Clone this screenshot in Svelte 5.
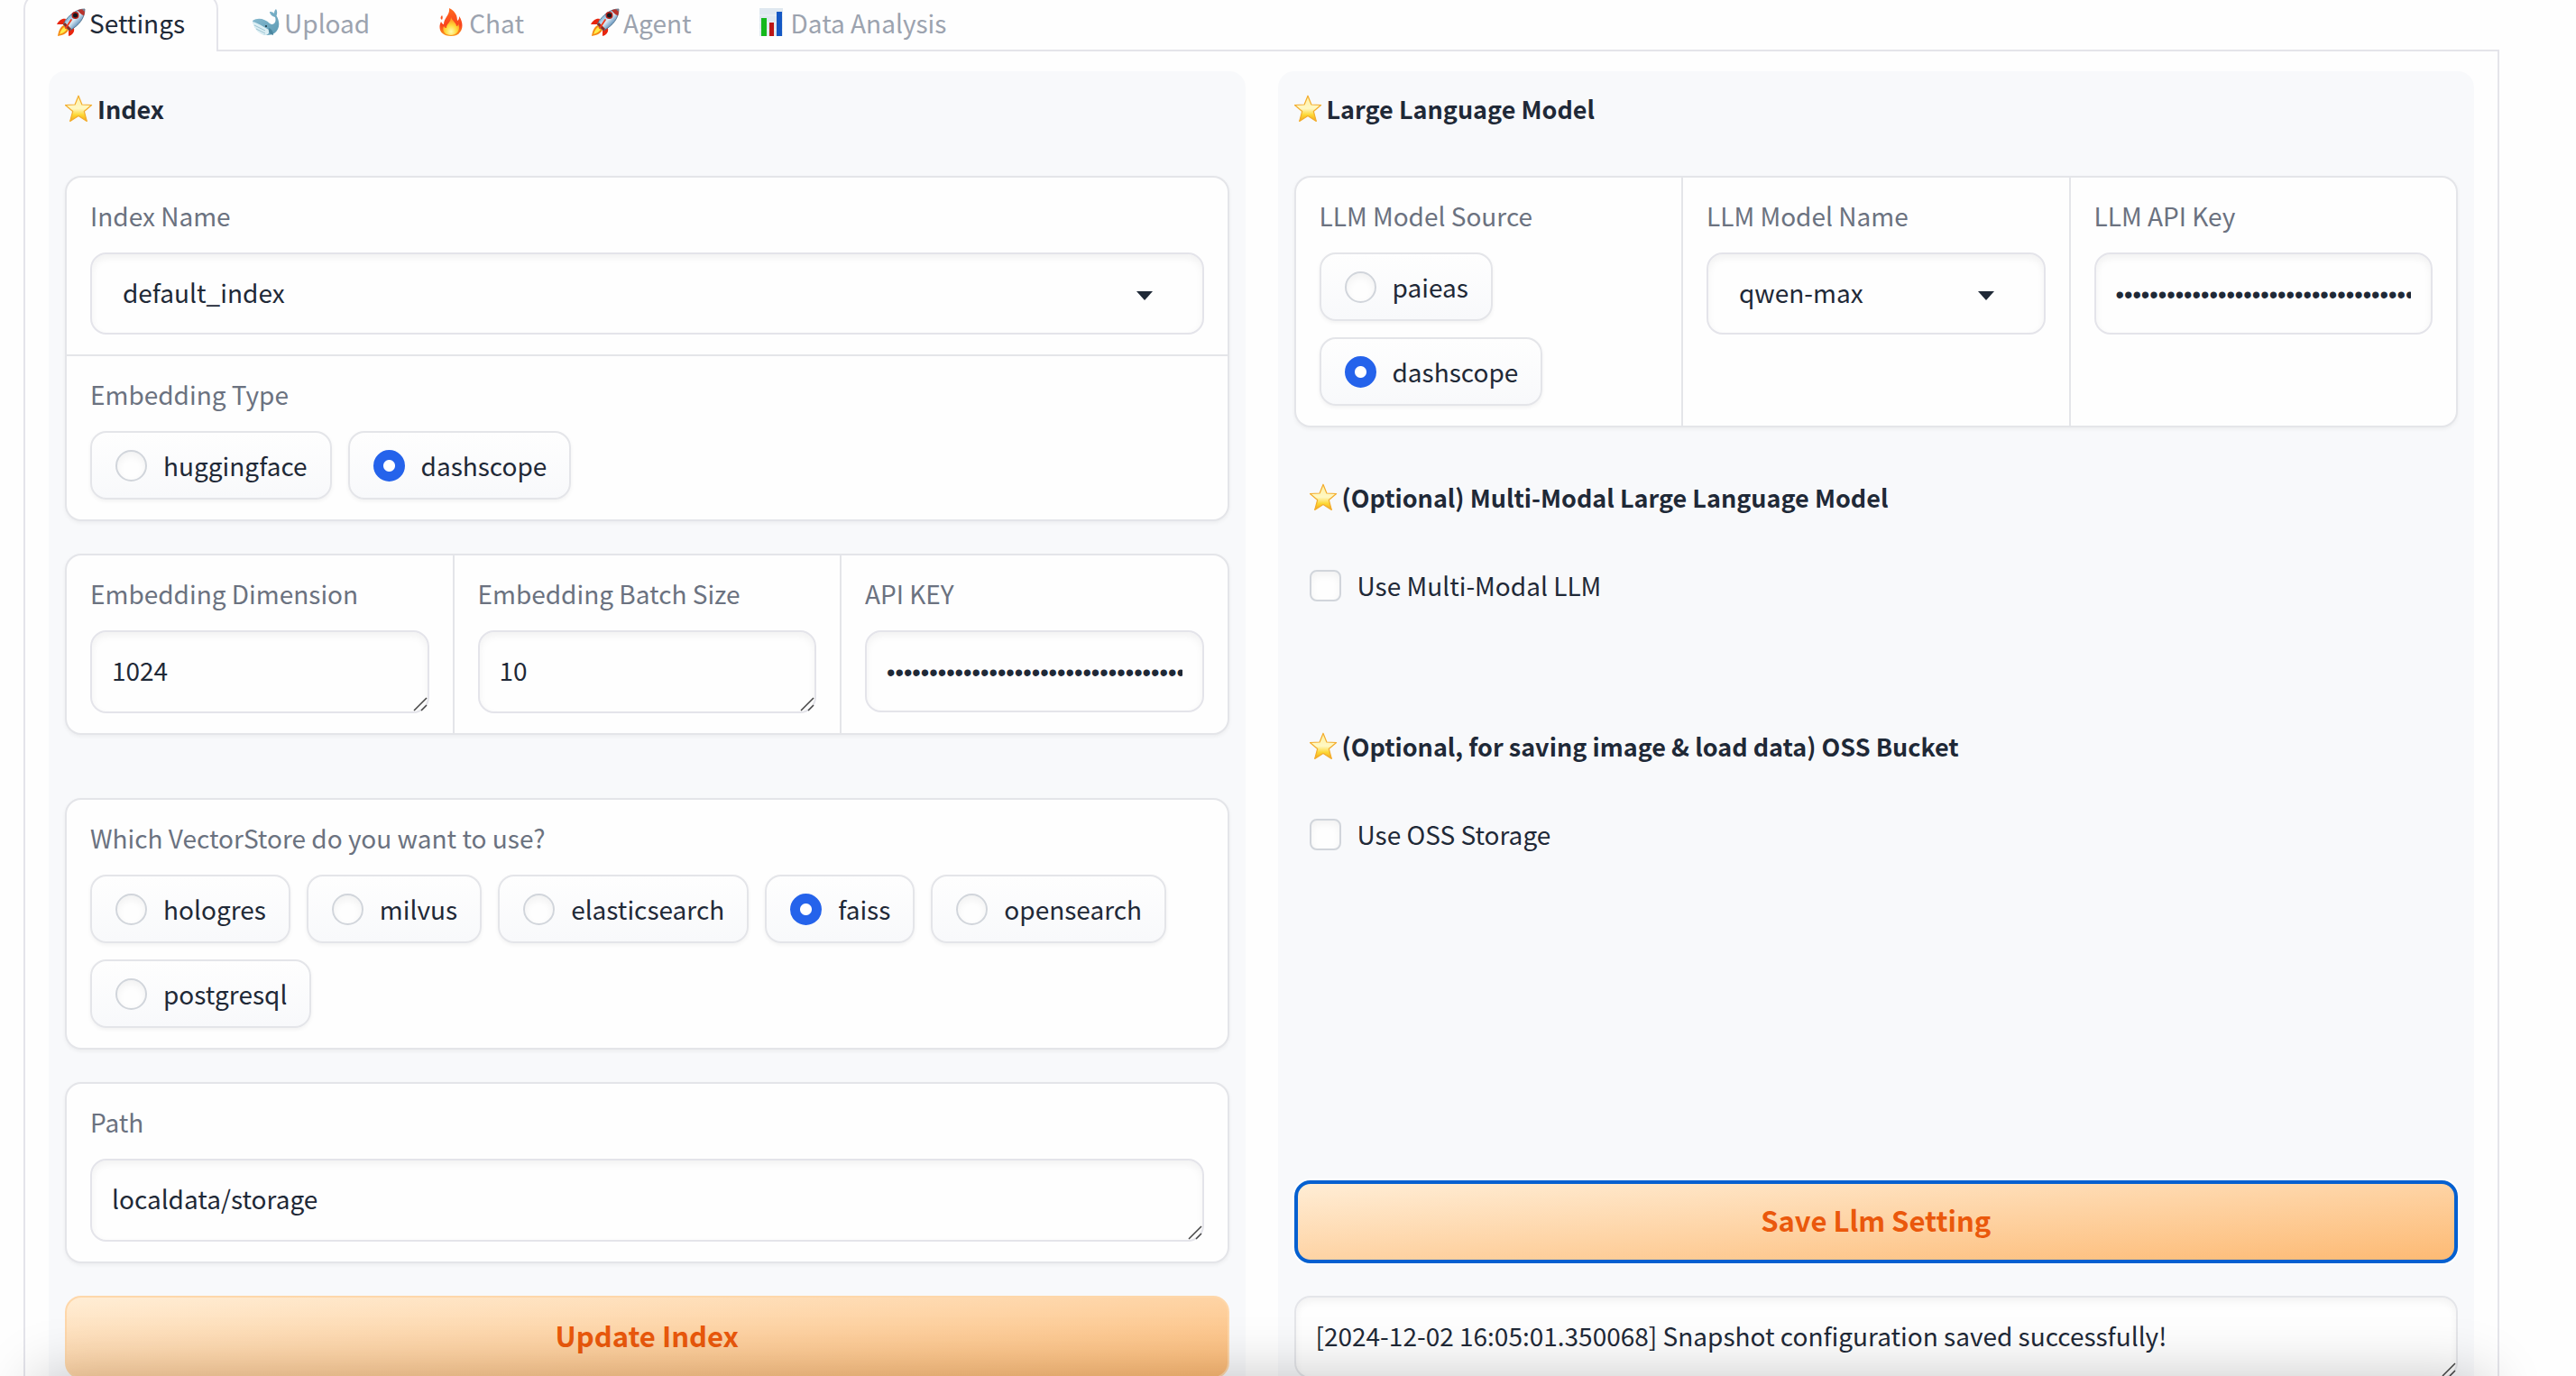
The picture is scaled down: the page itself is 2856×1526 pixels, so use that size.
<script>
  const tabs = [
    { icon: 'rocket', label: 'Settings' },
    { icon: 'whale', label: 'Upload' },
    { icon: 'fire', label: 'Chat' },
    { icon: 'rocket', label: 'Agent' },
    { icon: 'chart', label: 'Data Analysis' }
  ];
  const stores = ['hologres', 'milvus', 'elasticsearch', 'faiss', 'opensearch', 'postgresql'];

  let activeTab = $state('Settings');
  let indexName = $state('default_index');
  let embedding = $state('dashscope');
  let dimension = $state('1024');
  let batchSize = $state('10');
  let apiKey = $state('k'.repeat(35));
  let store = $state('faiss');
  let path = $state('localdata/storage');
  let llmSource = $state('dashscope');
  let llmName = $state('qwen-max');
  let llmKey = $state('k'.repeat(35));
  let multiModal = $state(false);
  let oss = $state(false);
  let output = $state('[2024-12-02 16:05:01.350068] Snapshot configuration saved successfully!');
</script>

{#snippet icon(name)}
  <svg class="icon" viewBox="0 0 32 32" aria-hidden="true">
    {#if name === 'star'}
      <defs>
        <linearGradient id="star-fill" x1="0" y1="0" x2="0" y2="1">
          <stop offset="0" stop-color="#fff0a0" />
          <stop offset=".5" stop-color="#fff8c4" />
          <stop offset=".75" stop-color="#fdd835" />
          <stop offset="1" stop-color="#f2a51c" />
        </linearGradient>
      </defs>
      <path d="M15 1.200 L18.900 11 L29.600 11.500 L21.300 18.500 L24.300 29.400 L15 23.500 L5.700 29.400 L8.700 18.500 L0.400 11.500 L11.100 11 Z" fill="url(#star-fill)" stroke="#f3ac2c" stroke-width="1.200" stroke-linejoin="round" />
    {:else if name === 'rocket'}
      <defs>
        <linearGradient id="rocket-body" x1="0" y1="0" x2="1" y2="1">
          <stop offset=".2" stop-color="#4f9bd0" />
          <stop offset=".5" stop-color="#dcebf4" />
          <stop offset=".8" stop-color="#2f6ea8" />
        </linearGradient>
      </defs>
      <path d="M10 12 C6 11 2 14 0 18 L8 18 Z M19 22 C20 27 17 30 13 31 L13 23 Z" fill="#e8250e" />
      <path d="M8 19 C4 20 2 25 1 31 C7 30 11 28 13 24 Z" fill="#f58a12" />
      <path d="M8 21 C5 23 4 26 3 29 C7 28 9 26 11 24 Z" fill="#ffec4a" />
      <path d="M31 1 C22 1 13 7 7 18 L14 25 C25 19 31 11 31 1 Z" fill="url(#rocket-body)" stroke="#45647c" stroke-width=".8" />
      <path d="M31 1 C28 1 25 1.500 23 2.500 C25 5 27 7 30 8.500 C30.800 6 31 3.500 31 1 Z" fill="#b9322a" />
      <path d="M31 1 L28 1.200 L30.500 4 Z" fill="#6c8aa0" />
      <circle cx="20.500" cy="8" r="4" fill="#b52018" />
      <circle cx="20.500" cy="8" r="2.500" fill="#101820" />
      <path d="M9 16 L16 23 L14 25 L7 18 Z" fill="#8d2b20" />
      <path d="M16 13 L10 22" stroke="#ef3b20" stroke-width="1.800" stroke-linecap="round" />
    {:else if name === 'whale'}
      <defs>
        <linearGradient id="whale-body" x1="0" y1="0" x2="1" y2="1">
          <stop offset="0" stop-color="#8fc0d4" />
          <stop offset="1" stop-color="#5b9ab4" />
        </linearGradient>
      </defs>
      <path d="M1 14 C7 10 15 12 20 17 C24 20 28 16 26 10 C22 9 20 6 20 4 C22 4 24 4.500 25 6 C25 4 25.500 2 27 1 C28.500 3 28.500 6 27.500 8.500 C32 16 31 24 25 28 C15 33 4 28 1 14 Z" fill="url(#whale-body)" />
      <path d="M1 15 C8 17 12 20 19 24 C20 27 19 29 16 30 C8 29 3 24 1 15 Z" fill="#dceff4" />
      <path d="M3 19 L15 25 M5 23 L15 28" stroke="#8bb8c8" stroke-width=".8" />
      <path d="M19 22 C22 23 24 26 24 30 C20 29 18 26 19 22 Z" fill="#4a869f" />
      <circle cx="16" cy="20" r="1" fill="#17313d" />
    {:else if name === 'fire'}
      <defs>
        <linearGradient id="fire-outer" x1="0" y1="0" x2="0" y2="1">
          <stop offset="0" stop-color="#ff6a1e" />
          <stop offset=".6" stop-color="#f9431d" />
          <stop offset="1" stop-color="#fb9a1b" />
        </linearGradient>
        <radialGradient id="fire-inner" cx=".5" cy=".8" r=".6">
          <stop offset="0" stop-color="#fffbb0" />
          <stop offset=".6" stop-color="#ffd83a" />
          <stop offset="1" stop-color="#ffa126" />
        </radialGradient>
      </defs>
      <path d="M14 0 C22 4 23 10 23 14 C25 13 25 11 25 9 C31 17 30 31 16 31 C5 31 1 23 5 15 C6 17 7 18 8 18 C8 11 15 8 14 0 Z" fill="url(#fire-outer)" />
      <path d="M16 10 C17 14 22 16 22 20 C24 20 24 18 24 17 C27 24 23 30 16 30 C8 30 6 24 8 20 C9 22 10 22 11 22 C11 17 16 16 16 10 Z" fill="url(#fire-inner)" />
      <path d="M6 8 C4 10 4 12 6 13 C7 11 7 9 6 8 Z" fill="#f9501d" />
    {:else}
      <rect x="1" y="0" width="26" height="31" fill="#dfe8f0" />
      <path d="M1 8 H27 M1 16 H27 M1 24 H27" stroke="#eef3f7" stroke-width="1" />
      <rect x="3" y="11" width="6" height="20" fill="#14b81c" />
      <rect x="12" y="16" width="5" height="15" fill="#bb1616" />
      <rect x="20" y="4" width="6" height="27" fill="#1458c4" />
    {/if}
  </svg>
{/snippet}

{#snippet grip()}
  <svg class="grip" viewBox="0 0 16 16" aria-hidden="true">
    <path d="M1 15 L15 1 M9 15 L15 9" stroke="#444" stroke-width="1.500" />
  </svg>
{/snippet}

{#snippet caret()}
  <svg class="caret" viewBox="0 0 18 10" aria-hidden="true"><path d="M0 0 H18 L9 10 Z" /></svg>
{/snippet}

<div class="page">
  <div class="tabs" role="tablist">
    {#each tabs as tab}
      <button
        class="tab"
        class:active={activeTab === tab.label}
        role="tab"
        aria-selected={activeTab === tab.label}
        onclick={() => (activeTab = tab.label)}
      >{@render icon(tab.icon)}{tab.label}</button>
    {/each}
  </div>

  <main class="panel">
    <section class="column">
      <h2 class="heading">{@render icon('star')}Index</h2>

      <div class="card">
        <div class="cell">
          <label class="label" for="index-name">Index Name</label>
          <div class="control">
            <select id="index-name" class="field select" bind:value={indexName}>
              <option>default_index</option>
            </select>
            {@render caret()}
          </div>
        </div>
        <fieldset class="cell">
          <legend class="label">Embedding Type</legend>
          <div class="choices">
            {#each ['huggingface', 'dashscope'] as option}
              <label class="choice">
                <input type="radio" name="embedding" value={option} bind:group={embedding} />{option}
              </label>
            {/each}
          </div>
        </fieldset>
      </div>

      <div class="card triple">
        <div class="cell">
          <label class="label" for="dimension">Embedding Dimension</label>
          <div class="control">
            <textarea id="dimension" class="field" rows="1" bind:value={dimension}></textarea>
            {@render grip()}
          </div>
        </div>
        <div class="cell">
          <label class="label" for="batch">Embedding Batch Size</label>
          <div class="control">
            <textarea id="batch" class="field" rows="1" bind:value={batchSize}></textarea>
            {@render grip()}
          </div>
        </div>
        <div class="cell">
          <label class="label" for="api-key">API KEY</label>
          <input id="api-key" class="field password" type="password" bind:value={apiKey} />
        </div>
      </div>

      <div class="card spaced">
        <fieldset class="cell">
          <legend class="label">Which VectorStore do you want to use?</legend>
          <div class="choices">
            {#each stores as option}
              <label class="choice">
                <input type="radio" name="store" value={option} bind:group={store} />{option}
              </label>
            {/each}
          </div>
        </fieldset>
      </div>

      <div class="card">
        <div class="cell">
          <label class="label" for="path">Path</label>
          <div class="control">
            <textarea id="path" class="field" rows="1" bind:value={path}></textarea>
            {@render grip()}
          </div>
        </div>
      </div>

      <button class="primary">Update Index</button>
    </section>

    <section class="column">
      <h2 class="heading">{@render icon('star')}Large Language Model</h2>

      <div class="card triple">
        <fieldset class="cell">
          <legend class="label">LLM Model Source</legend>
          <div class="choices stacked">
            {#each ['paieas', 'dashscope'] as option}
              <label class="choice">
                <input type="radio" name="llm-source" value={option} bind:group={llmSource} />{option}
              </label>
            {/each}
          </div>
        </fieldset>
        <div class="cell">
          <label class="label" for="llm-name">LLM Model Name</label>
          <div class="control">
            <select id="llm-name" class="field select" bind:value={llmName}>
              <option>qwen-max</option>
            </select>
            {@render caret()}
          </div>
        </div>
        <div class="cell">
          <label class="label" for="llm-key">LLM API Key</label>
          <input id="llm-key" class="field password" type="password" bind:value={llmKey} />
        </div>
      </div>

      <div class="group">
        <h2 class="heading">{@render icon('star')}(Optional) Multi-Modal Large Language Model</h2>
        <label class="check"><input type="checkbox" bind:checked={multiModal} />Use Multi-Modal LLM</label>
      </div>

      <div class="group last">
        <h2 class="heading">{@render icon('star')}(Optional, for saving image &amp; load data) OSS Bucket</h2>
        <label class="check"><input type="checkbox" bind:checked={oss} />Use OSS Storage</label>
      </div>

      <button class="primary focused">Save Llm Setting</button>

      <div class="control">
        <textarea class="field output" rows="1" aria-label="Output" bind:value={output}></textarea>
        {@render grip()}
      </div>
    </section>
  </main>

  <div class="bottom-shade"></div>
</div>

<style>
  :global(body) {
    background: #fefefe;
  }

  .page {
    box-sizing: border-box;
    height: 100vh;
    overflow: hidden;
    padding: 0 85px 0 26px;
    font-family: 'Noto Sans CJK SC', 'Noto Sans', sans-serif;
    font-size: 28px;
    line-height: 46px;
    color: #1f2937;
  }

  .page :is(button, input, select, textarea) {
    box-sizing: border-box;
    margin: 0;
    font: inherit;
    color: inherit;
  }

  .icon {
    flex: none;
    width: 32px;
    height: 32px;
    margin-right: 4px;
  }

  .tabs {
    display: flex;
    margin-top: -8px;
  }

  .page .tab {
    display: flex;
    align-items: center;
    margin-bottom: -2px;
    padding: 8px 35px 9px;
    border: 2px solid transparent;
    border-bottom: 0;
    border-radius: 18px 18px 0 0;
    background: none;
    color: #9ca3af;
    position: relative;
  }

  .page .tab.active {
    border-color: #e4e4ea;
    background: #fefefe;
    color: #1f2937;
  }

  .panel {
    display: grid;
    grid-template-columns: 1fr 1fr;
    gap: 36px;
    padding: 22px 26px;
    border: 2px solid #e4e4ea;
  }

  .column {
    display: flex;
    flex-direction: column;
    gap: 36px;
    padding: 18px;
    border-radius: 18px;
    background: #f8f9fb;
  }

  .heading {
    display: flex;
    align-items: center;
    margin: 0;
    padding: 1px 0 15px;
    font-size: 27px;
    font-weight: 700;
  }

  .card {
    display: grid;
    gap: 2px;
    overflow: hidden;
    border: 2px solid #e4e5e9;
    border-radius: 18px;
    background: #e4e5e9;
    box-shadow: 0 2px 4px rgba(0, 0, 0, 0.05);
  }

  .triple {
    grid-template-columns: repeat(3, 1fr);
  }

  .spaced {
    margin-top: 34px;
  }

  .cell {
    min-width: 0;
    margin: 0;
    padding: 19px 26px 22px;
    border: 0;
    background: #fefefe;
  }

  .label {
    display: block;
    float: left;
    width: 100%;
    margin-bottom: 18px;
    padding: 0;
    color: #6b7280;
  }

  .control {
    display: grid;
    width: 100%;
    position: relative;
  }

  .field {
    display: block;
    width: 100%;
    padding: 19px 22px 23px;
    border: 2px solid #e4e4ea;
    border-radius: 18px;
    background: #fefefe;
    box-shadow: inset 0 4px 8px rgba(0, 0, 0, 0.05);
    resize: none;
    overflow: hidden;
    outline: none;
  }

  .page textarea.field {
    height: 92px;
  }

  .page .select {
    height: 91px;
    padding: 0 80px 4px 34px;
    appearance: none;
  }

  .page .password {
    height: 91px;
    padding: 23px 22px 19px;
    font-family: 'Liberation Sans', sans-serif;
    font-size: 27px;
  }

  .page .output {
    border-color: #e4e5e9;
  }

  .caret {
    position: absolute;
    top: 43px;
    right: 57px;
    width: 18px;
    height: 10px;
    fill: #1f2937;
    pointer-events: none;
  }

  .grip {
    position: absolute;
    right: 2px;
    bottom: 2px;
    width: 16px;
    height: 16px;
    pointer-events: none;
  }

  .choices {
    display: flex;
    flex-wrap: wrap;
    gap: 18px;
    width: 100%;
  }

  .stacked {
    flex-direction: column;
    align-items: flex-start;
  }

  .choice {
    display: flex;
    align-items: center;
    gap: 18px;
    padding: 13px 25px 13px 26px;
    border: 2px solid #e4e5e9;
    border-radius: 18px;
    background: linear-gradient(to top, #f8f9fb, #fefefe);
    box-shadow: 0 2px 4px rgba(0, 0, 0, 0.05);
  }

  .choice input,
  .check input {
    flex: none;
    width: 35px;
    height: 35px;
    border: 2px solid #d1d5db;
    background: #fefefe;
    box-shadow: inset 0 4px 8px rgba(0, 0, 0, 0.05);
    appearance: none;
  }

  .choice input {
    border-radius: 50%;
  }

  .choice input:checked {
    border-color: #2563eb;
    background: radial-gradient(circle, #fff 6px, #2563eb 7px);
    box-shadow: none;
  }

  .group {
    display: flex;
    flex-direction: column;
    gap: 36px;
    min-height: 204px;
    padding: 18px 17px;
  }

  .last {
    flex: 1;
  }

  .check {
    display: flex;
    align-items: center;
    gap: 18px;
  }

  .check input {
    border-radius: 8px;
  }

  .page .primary {
    height: 92px;
    padding: 0 0 4px;
    border: 2px solid #fed7aa;
    border-radius: 18px;
    background: linear-gradient(to bottom right, #ffedd5, #fdba74);
    font-size: 31px;
    font-weight: 700;
    color: #ea580c;
  }

  .page .focused {
    border: 4px solid #0560d0;
    box-shadow: 0 0 0 2px #fff;
  }

  .bottom-shade {
    position: fixed;
    right: 100px;
    bottom: -200px;
    left: 40px;
    height: 200px;
    box-shadow: 0 0 60px rgba(0, 0, 0, 0.22);
    pointer-events: none;
  }
</style>
